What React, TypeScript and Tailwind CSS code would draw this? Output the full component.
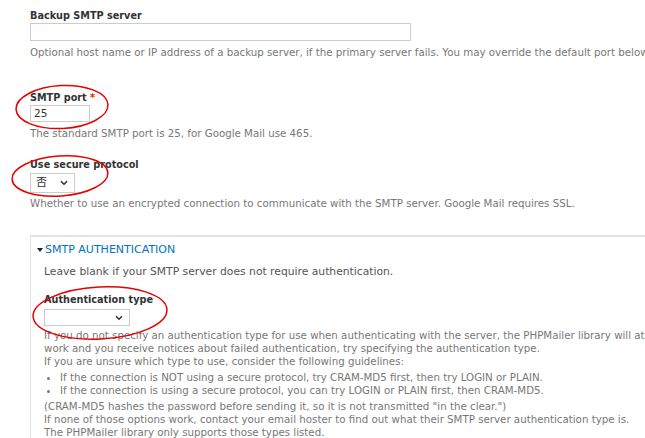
import React from "react";

const Chevron = () => (
  <svg width="8" height="6" viewBox="0 0 8 6" className="block">
    <path d="M1 1.2 L4 4.2 L7 1.2" fill="none" stroke="#333" strokeWidth="1.6" />
  </svg>
);

export default function App() {
  return (
    <div
      className="relative w-[645px] h-[438px] overflow-hidden bg-white text-[#333]"
      style={{ fontFamily: '"DejaVu Sans", "Noto Sans CJK SC", sans-serif' }}
    >
      <div className="pl-[30px] pt-[9px] w-[1200px]">
        {/* backup server */}
        <div className="text-[9.7px] font-bold leading-[13px]">Backup SMTP server</div>
        <div className="mt-[1px] w-[381px] h-[18px] border border-[#ccc]"></div>
        <div className="mt-[5px] text-[10.25px] leading-[13px] text-[#777] whitespace-nowrap">
          Optional host name or IP address of a backup server, if the primary server fails. You may override the default port below by appending it to the host name separated by a colon. Example: localhost:465
        </div>

        {/* port */}
        <div className="mt-[32px] text-[9.7px] font-bold leading-[13px]">
          SMTP port <span className="text-[#e32700]">*</span>
        </div>
        <div className="mt-[1px] w-[60px] h-[17px] border border-[#ccc] text-[10.5px] leading-[15px] pl-[3px]">25</div>
        <div className="mt-[5px] text-[10.25px] leading-[13px] text-[#777]">
          The standard SMTP port is 25, for Google Mail use 465.
        </div>

        {/* protocol */}
        <div className="mt-[18px] text-[9.7px] font-bold leading-[13px]">Use secure protocol</div>
        <div className="mt-[2px] w-[45px] h-[20px] border border-[#ccc] flex items-center justify-between pl-[5px] pr-[6px] text-[11px]">
          <span>否</span>
          <Chevron />
        </div>
        <div className="mt-[4px] text-[10.25px] leading-[13px] text-[#777]">
          Whether to use an encrypted connection to communicate with the SMTP server. Google Mail requires SSL.
        </div>

        {/* fieldset */}
        <div className="mt-[25px] border-t-2 border-l border-[#e2e2e2] pl-[6px]">
          <div className="mt-[6px] flex items-center leading-[14px]">
            <svg width="6" height="4" viewBox="0 0 6 4" className="mr-[2px]">
              <path d="M0 0 L6 0 L3 4 Z" fill="#222" />
            </svg>
            <span className="text-[11px] text-[#0074bd]">SMTP AUTHENTICATION</span>
          </div>
          <div className="pl-[7px]">
            <div className="mt-[8px] text-[10.75px] leading-[14px] text-[#555]">
              Leave blank if your SMTP server does not require authentication.
            </div>
            <div className="mt-[14px] text-[9.7px] font-bold leading-[13px]">Authentication type</div>
            <div className="mt-[3px] w-[86px] h-[17px] border border-[#ccc] flex items-center justify-end pr-[6px]">
              <Chevron />
            </div>
            <div className="mt-[3px] text-[10.25px] leading-[13px] text-[#777] whitespace-nowrap">
              If you do not specify an authentication type for use when authenticating with the server, the PHPMailer library will attempt to use the best method. If that method does not
              <br />
              work and you receive notices about failed authentication, try specifying the authentication type.
              <br />
              If you are unsure which type to use, consider the following guidelines:
              <ul className="mt-[3px] mb-[3px] pl-[16px] list-disc">
                <li>If the connection is NOT using a secure protocol, try CRAM-MD5 first, then try LOGIN or PLAIN.</li>
                <li>If the connection is using a secure protocol, you can try LOGIN or PLAIN first, then CRAM-MD5.</li>
              </ul>
              (CRAM-MD5 hashes the password before sending it, so it is not transmitted "in the clear.")
              <br />
              If none of those options work, contact your email hoster to find out what their SMTP server authentication type is.
              <br />
              The PHPMailer library only supports those types listed.
            </div>
          </div>
        </div>
      </div>

      {/* red annotations */}
      <svg className="absolute inset-0 pointer-events-none" width="645" height="438">
        <ellipse cx="62" cy="107" rx="46" ry="21.5" transform="rotate(-3 62 107)" fill="none" stroke="#e60000" strokeWidth="1.5" />
        <ellipse cx="60" cy="176" rx="48" ry="20" transform="rotate(-4 60 176)" fill="none" stroke="#e60000" strokeWidth="1.5" />
        <ellipse cx="100" cy="313" rx="67" ry="26" transform="rotate(-3 100 313)" fill="none" stroke="#e60000" strokeWidth="1.5" />
      </svg>
    </div>
  );
}
